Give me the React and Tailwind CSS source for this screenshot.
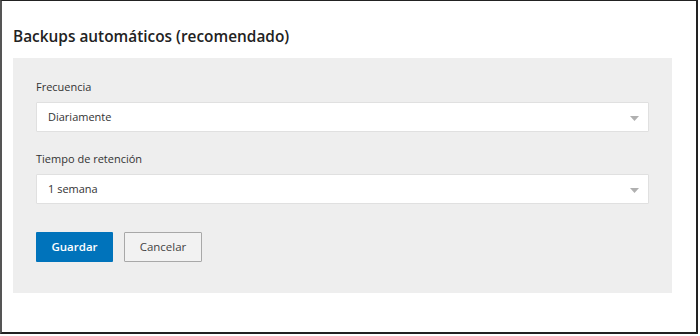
import React from 'react';

const SelectField = ({ label, value }) => (
    <div className="flex flex-col">
        <label className="text-[11px] text-[#333] leading-[16px] mb-[7px]">{label}</label>
        <div className="relative h-[30px] bg-white border border-[#e0e0e0] rounded-[1px] flex items-center pl-[11px]">
            <span className="text-[11px] text-[#333]">{value}</span>
            <svg className="absolute right-[9px] top-[13px]" width="9" height="5" viewBox="0 0 9 5">
                <path d="M0 0 L9 0 L4.5 5 Z" fill="#b0b0b0" />
            </svg>
        </div>
    </div>
);

const App = () => {
    return (
        <div className="w-[700px] h-[336px] bg-white" style={{ fontFamily: '"Open Sans", sans-serif' }}>
            <div className="w-[698px] h-[334px] border-l-2 border-t border-r-2 border-b-2 border-[#222] border-l-[#555] pt-[25px] pl-[11px]">
                <h2 className="text-[15.4px] font-semibold text-[#222] leading-[22px] mb-[10px]">Backups automáticos (recomendado)</h2>
                <div className="w-[659px] h-[235px] bg-[#eeeeee] pt-[21px] px-[23px]">
                    <SelectField label="Frecuencia" value="Diariamente" />
                    <div className="mt-[19px]">
                        <SelectField label="Tiempo de retención" value="1 semana" />
                    </div>
                    <div className="flex gap-[11px] mt-[28px]">
                        <button className="w-[77px] h-[30px] bg-[#0073bb] text-white text-[11.5px] font-semibold rounded-[1px]">Guardar</button>
                        <button className="w-[78px] h-[30px] bg-[#f2f2f2] border border-[#a8a8a8] text-[#444] text-[11.5px] font-medium rounded-[1px]">Cancelar</button>
                    </div>
                </div>
            </div>
        </div>
    );
};

export default App;
